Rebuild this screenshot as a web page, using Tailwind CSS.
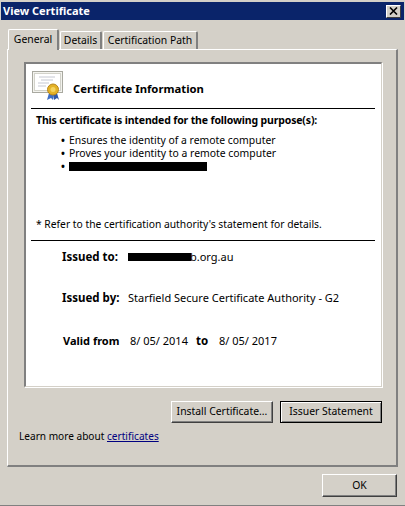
<!DOCTYPE html>
<html lang="en">
<head>
  <meta charset="UTF-8" />
  <title>View Certificate</title>
  <script src="https://cdn.jsdelivr.net/npm/@tailwindcss/browser@4"></script>
</head>
<body class="bg-white">
  <div class="w-[405px] h-[506px] overflow-hidden flex flex-col bg-[#d4d0c8] border-b border-b-[#808080] pt-[2px] font-['Noto_Sans',sans-serif] text-[10.4px] text-black">
    <!-- title bar -->
    <div class="mx-[1px] h-[18px] shrink-0 bg-[#0a246a] flex items-center justify-between pl-[2px] pr-[3px]">
      <span class="text-white font-bold text-[11px] mt-[1px]">View Certificate</span>
      <button class="w-[15px] h-[13px] bg-[#d4d0c8] border border-t-white border-l-white border-r-[#404040] border-b-[#404040] flex items-center justify-center">
        <svg width="9" height="8" viewBox="0 0 9 8"><path d="M1 0.5 L8 7.5 M8 0.5 L1 7.5" stroke="#000" stroke-width="1.6" fill="none"/></svg>
      </button>
    </div>

    <!-- tabs -->
    <div class="flex items-end pl-[8px] h-[29px] shrink-0 relative z-10">
      <div class="w-[51px] h-[21px] bg-[#d4d0c8] border-t border-l border-white border-r-2 border-r-[#808080] rounded-t-[2px] text-center pt-[2px] mb-[-1px]">General</div>
      <div class="w-[42px] h-[18px] ml-[1px] bg-[#d4d0c8] border-t border-l border-white border-r-2 border-r-[#808080] rounded-t-[2px] text-center pt-[1px]">Details</div>
      <div class="w-[95px] h-[18px] ml-[1px] bg-[#d4d0c8] border-t border-l border-white border-r-2 border-r-[#808080] rounded-t-[2px] text-center pt-[1px]">Certification Path</div>
    </div>

    <!-- tab panel -->
    <div class="ml-[7px] w-[391px] h-[418px] shrink-0 border-t border-l border-white border-r-2 border-b-2 border-r-[#808080] border-b-[#808080] pt-[12px] pl-[16px]">
      <div class="w-[358px] h-[325px] bg-white border-t-2 border-l-2 border-t-[#808080] border-l-[#808080] border-r border-b border-r-[#d4d0c8] border-b-[#d4d0c8] shadow-[1px_1px_0_#fff] pl-[5px] pr-[6px] flex flex-col">
        <!-- header -->
        <div class="h-[45px] shrink-0 flex items-center border-b border-b-black">
          <svg class="ml-[1px]" width="32" height="30" viewBox="0 0 32 30">
            <rect x="0.5" y="0.5" width="30" height="21" fill="#f3f3ee" stroke="#a9a9a0"/>
            <rect x="2.5" y="2.5" width="26" height="17" fill="#fff" stroke="#d2d2ca"/>
            <path d="M7 6h16M9 9h12M6 12h11M6 15h8" stroke="#c5c8d2" stroke-width="1"/>
            <path d="M17 22 L15 29 L19 27 L21 29 L22 23Z" fill="#3f6fc4"/>
            <path d="M21 22 L22 29 L25 27 L27 29 L25 22Z" fill="#2f58a8"/>
            <circle cx="21" cy="18.5" r="5.5" fill="#e3b126" stroke="#b8861a"/>
            <circle cx="21" cy="18.5" r="2.5" fill="#f4d35e"/>
          </svg>
          <span class="ml-[9px] mt-[7px] font-bold text-[11.3px]">Certificate Information</span>
        </div>

        <p class="font-bold text-[10.5px] tracking-[-0.15px] mt-[5px] ml-[5px] leading-[13px] whitespace-nowrap">This certificate is intended for the following purpose(s):</p>
        <ul class="mt-[7px] ml-[30px] leading-[13px] flex flex-col">
          <li class="flex gap-[2px]"><span class="w-[6px] font-bold">•</span>Ensures the identity of a remote computer</li>
          <li class="flex gap-[2px]"><span class="w-[6px] font-bold">•</span>Proves your identity to a remote computer</li>
          <li class="flex gap-[2px] items-center h-[13px]"><span class="w-[6px] font-bold">•</span><span class="w-[138px] h-[9px] bg-black"></span></li>
        </ul>

        <p class="mt-[45px] ml-[5px] leading-[13px] text-[10.3px]">* Refer to the certification authority's statement for details.</p>
        <div class="mt-[9px] h-px bg-black shrink-0"></div>

        <div class="mt-[9px] ml-[31px] flex items-center h-[14px] text-[11px]">
          <span class="w-[66px] font-bold text-[11.5px]">Issued to:</span>
          <span class="w-[63px] h-[8px] bg-black"></span><span class="-ml-[1px]">b.org.au</span>
        </div>
        <div class="mt-[27px] ml-[31px] flex items-center h-[14px] text-[11px]">
          <span class="w-[66px] font-bold text-[11.5px]">Issued by:</span>
          <span>Starfield Secure Certificate Authority - G2</span>
        </div>
        <div class="mt-[29px] ml-[32px] flex items-center h-[14px] text-[11px]">
          <span class="w-[67px] font-bold text-[11px]">Valid from</span>
          <span class="w-[66px]">8/ 05/ 2014</span>
          <span class="w-[23px] font-bold text-[11.5px]">to</span>
          <span>8/ 05/ 2017</span>
        </div>
      </div>

      <!-- buttons -->
      <div class="mt-[14px] w-[358px] flex justify-end gap-[7px]">
        <button class="w-[102px] h-[22px] bg-[#d4d0c8] border border-t-white border-l-white border-r-[#404040] border-b-[#404040] shadow-[inset_-1px_-1px_0_#808080]">Install Certificate...</button>
        <button class="w-[102px] h-[22px] bg-[#d4d0c8] border border-black shadow-[inset_1px_1px_0_#fff,inset_-1px_-1px_0_#808080]">Issuer Statement</button>
      </div>
      <p class="mt-[7px] -ml-[5px] leading-[13px] text-[10.1px]">Learn more about <a class="text-[#000080] underline">certificates</a></p>
    </div>

    <!-- footer -->
    <div class="mt-[7px] flex justify-end pr-[8px]">
      <button class="w-[75px] h-[23px] bg-[#d4d0c8] border border-t-white border-l-white border-r-[#404040] border-b-[#404040] shadow-[inset_-1px_-1px_0_#808080]">OK</button>
    </div>
  </div>
</body>
</html>
